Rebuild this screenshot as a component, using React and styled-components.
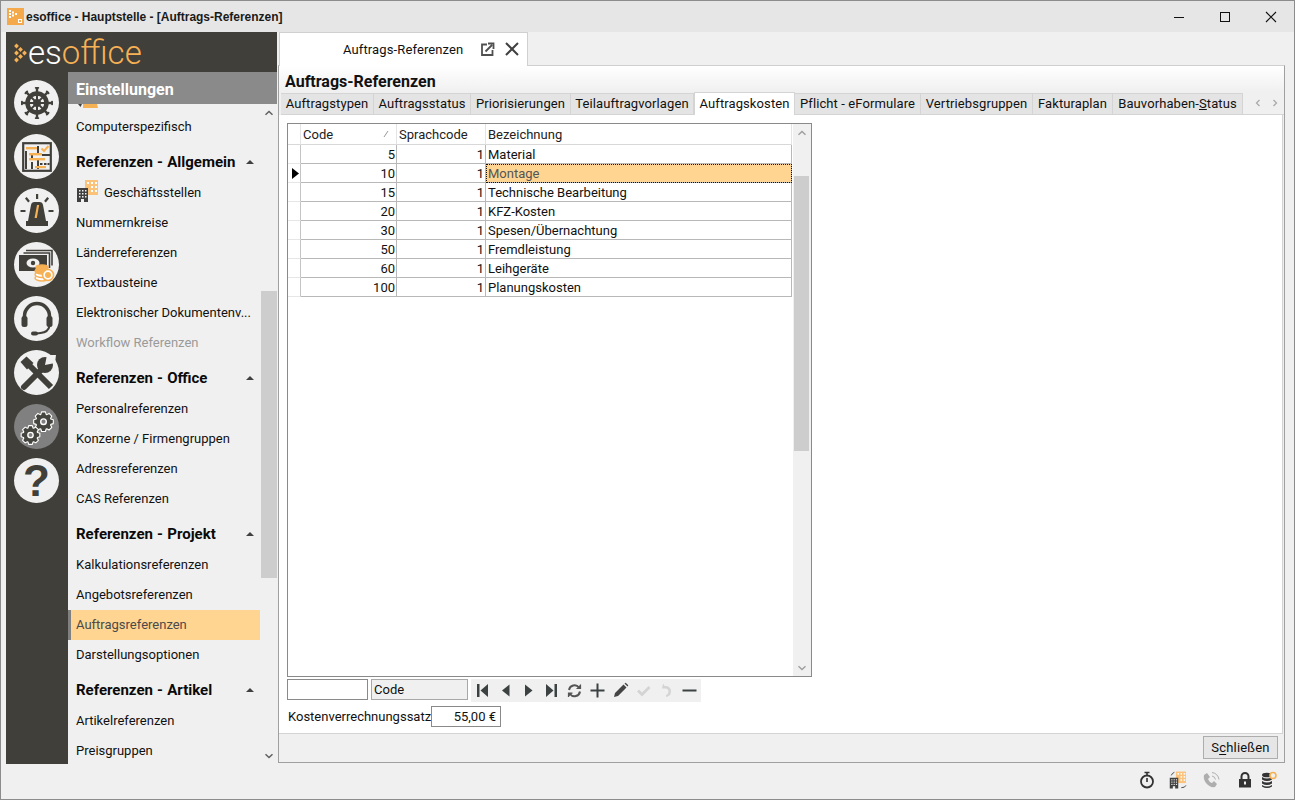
import React from 'react';
import styled, { createGlobalStyle } from 'styled-components';

const GlobalStyle = createGlobalStyle`
  html, body {
    margin: 0;
    padding: 0;
    height: 100%;
    overflow: hidden;
  }
  body {
    font-family: Roboto, "Liberation Sans", sans-serif;
    font-size: 13px;
    color: #111;
    background: #f0f0f0;
  }
  * { box-sizing: border-box; }
`;

const ORANGE = '#f7b155';
const DARK = '#403f3a';

const Window = styled.div`
  width: 1295px;
  height: 800px;
  display: flex;
  flex-direction: column;
  background: #f0f0f0;
  border: 1px solid #8c8c8c;
`;

const TitleBar = styled.div`
  height: 31px;
  flex: none;
  display: flex;
  align-items: center;
  background: #e6e6e6;
  padding-left: 6px;
`;

const TitleText = styled.div`
  margin-left: 2px;
  font-family: "Liberation Sans", sans-serif;
  font-size: 12px;
  font-weight: 700;
  letter-spacing: -0.02px;
  color: #1a1a1a;
  flex: 1;
`;

const WinButton = styled.div`
  width: 46px;
  height: 31px;
  display: flex;
  align-items: center;
  justify-content: center;
`;

const Body = styled.div`
  height: 733px;
  flex: none;
  display: flex;
  padding-left: 5px;
`;

const Sidebar = styled.div`
  width: 271px;
  height: 732px;
  flex: none;
  display: flex;
  flex-direction: column;
  background: ${DARK};
`;

const LogoRow = styled.div`
  height: 40px;
  flex: none;
  display: flex;
  align-items: center;
  padding: 2px 0 0 8px;
`;

const LogoText = styled.div`
  margin-left: 1px;
  font-family: Roboto, sans-serif;
  font-weight: 300;
  font-size: 33px;
  line-height: 38px;
  color: ${ORANGE};
  span { color: #fff; }
`;

const SideMain = styled.div`
  flex: 1;
  min-height: 0;
  display: flex;
`;

const Rail = styled.div`
  width: 62px;
  flex: none;
  display: flex;
  flex-direction: column;
  align-items: center;
  gap: 9px;
  padding: 8px 1px 0 0;
`;

const RailButton = styled.div`
  width: 45px;
  height: 45px;
  border-radius: 50%;
  flex: none;
  display: flex;
  align-items: center;
  justify-content: center;
  background: ${(p) => (p.$active ? '#808080' : '#f0f0f0')};
`;

const QuestionMark = styled.span`
  font-family: "Liberation Sans", sans-serif;
  font-weight: 700;
  font-size: 44px;
  line-height: 45px;
  color: ${DARK};
`;

const MenuColumn = styled.div`
  width: 209px;
  flex: none;
  display: flex;
  flex-direction: column;
`;

const MenuHeader = styled.div`
  height: 32px;
  flex: none;
  display: flex;
  align-items: center;
  padding: 2px 0 0 8px;
  background: #8a8a8a;
  color: #fff;
  font-size: 16px;
  font-weight: 700;
`;

const MenuBody = styled.div`
  flex: 1;
  min-height: 0;
  display: flex;
  background: #f0f0f0;
`;

const MenuList = styled.div`
  width: 192px;
  flex: none;
  overflow: hidden;
`;

const ClippedIcon = styled.div`
  height: 8px;
  padding-left: 10px;
  svg { display: block; }
`;

const MenuItem = styled.div`
  height: 30px;
  display: flex;
  align-items: center;
  padding-left: ${(p) => (p.$selected ? '5px' : '8px')};
  padding-bottom: 2px;
  white-space: nowrap;
  color: ${(p) => (p.$selected ? '#4a4a4a' : p.$disabled ? '#9a9a9a' : '#111')};
  background: ${(p) => (p.$selected ? '#ffd591' : 'transparent')};
  border-left: ${(p) => (p.$selected ? '3px solid #808080' : 'none')};
  svg { margin-right: 2px; margin-top: -3px; }
`;

const MenuGroup = styled.div`
  height: 36px;
  display: flex;
  align-items: center;
  justify-content: space-between;
  padding: 4px 3px 0 8px;
  font-size: 15px;
  font-weight: 700;
  word-spacing: 0.5px;
  color: #0a0a0a;
`;

const GroupCaret = styled.div`
  width: 0;
  height: 0;
  margin-right: 3px;
  border-left: 4px solid transparent;
  border-right: 4px solid transparent;
  border-bottom: 4px solid #404040;
`;

const Scrollbar = styled.div`
  width: ${(p) => p.$width}px;
  flex: none;
  display: flex;
  flex-direction: column;
  background: #f0f0f0;
`;

const ScrollArrow = styled.div`
  height: 17px;
  flex: none;
  display: flex;
  align-items: center;
  justify-content: center;
`;

const ScrollGap = styled.div`
  height: ${(p) => p.$height}px;
  flex: none;
`;

const ScrollThumb = styled.div`
  flex: none;
  height: ${(p) => p.$height}px;
  margin: 0 ${(p) => p.$right}px 0 1px;
  background: #cdcdcd;
`;

const ScrollFill = styled.div`
  flex: 1;
`;

const Main = styled.div`
  flex: 1;
  min-width: 0;
  display: flex;
  flex-direction: column;
  padding: 0 10px 0 1px;
`;

const DocTabs = styled.div`
  height: 33px;
  flex: none;
  display: flex;
  padding-left: 1px;
`;

const DocTab = styled.div`
  width: 249px;
  height: 34px;
  display: flex;
  align-items: center;
  padding: 0 0 1px 63px;
  gap: 17px;
  background: #fff;
  border: 1px solid #d0d0d0;
  border-bottom: none;
  position: relative;
  z-index: 1;
  letter-spacing: 0.12px;
`;

const DocTabIcons = styled.div`
  display: flex;
  align-items: center;
  gap: 9px;
`;

const Panel = styled.div`
  width: 1007px;
  height: 698px;
  flex: none;
  display: flex;
  flex-direction: column;
  border: 1px solid #a0a0a0;
  border-top-color: #d0d0d0;
`;

const PanelHead = styled.div`
  height: 26px;
  flex: none;
  padding: 6px 0 0 6px;
  background: linear-gradient(#fff, #f0f0f0);
  font-size: 16px;
  line-height: 19px;
  font-weight: 700;
  color: #111;
`;

const TabStrip = styled.div`
  height: 23px;
  flex: none;
  display: flex;
  align-items: flex-end;
  padding-left: 2px;
  background: #f0f0f0;
`;

const Tab = styled.div`
  width: ${(p) => p.$width}px;
  height: ${(p) => (p.$active ? '23px' : '22px')};
  flex: none;
  display: flex;
  align-items: center;
  justify-content: center;
  padding-bottom: 2px;
  white-space: nowrap;
  background: ${(p) => (p.$active ? '#fff' : '#e4e4e4')};
  border: 1px solid #d4d4d4;
  border-left: ${(p) => (p.$active ? '1px solid #d4d4d4' : 'none')};
  border-bottom: ${(p) => (p.$active ? 'none' : '1px solid #d4d4d4')};
  letter-spacing: 0.1px;
`;

const TabArrows = styled.div`
  flex: 1;
  display: flex;
  align-items: center;
  justify-content: flex-end;
  gap: 9px;
  padding: 0 5px 2px 0;
  height: 22px;
  border-bottom: 1px solid #d4d4d4;
`;

const Content = styled.div`
  flex: 1;
  min-height: 0;
  background: #fff;
  border-right: 1px solid #d4d4d4;
  padding: 8px 0 0 8px;
  margin-right: 1px;
`;

const GridBox = styled.div`
  width: 525px;
  height: 554px;
  display: flex;
  border: 1px solid #8a8a8a;
  background: #fff;
`;

const GridArea = styled.div`
  width: 505px;
  flex: none;
`;

const Row = styled.div`
  display: grid;
  grid-template-columns: 13px 96px 89px 306px;
  height: ${(p) => (p.$head ? '21px' : '19px')};
`;

const HeadCell = styled.div`
  display: flex;
  align-items: center;
  justify-content: space-between;
  padding: 0 7px 0 2px;
  background: #fff;
  border-right: 1px solid #e4e4e4;
  border-bottom: 1px solid #d8d8d8;
  color: #222;
`;

const Indicator = styled.div`
  display: flex;
  align-items: center;
  justify-content: center;
  padding-left: 2px;
  border-right: 1px solid #c4c4c4;
  border-bottom: 1px solid #e6e6e6;
`;

const Cell = styled.div`
  display: flex;
  align-items: center;
  justify-content: ${(p) => (p.$right ? 'flex-end' : 'flex-start')};
  padding: 0 ${(p) => (p.$right ? '1px' : '0')} 0 2px;
  border-right: 1px solid #b8b8b8;
  border-bottom: 1px solid #b8b8b8;
  white-space: nowrap;
`;

const SelectedCell = styled(Cell)`
  background: #ffd591;
  color: #555;
  outline: 1px dotted #111;
  outline-offset: -1px;
`;

const Toolbar = styled.div`
  display: flex;
  align-items: flex-start;
  margin-top: 2px;
  height: 22px;
`;

const FieldBase = styled.div`
  height: 21px;
  flex: none;
  border: 1px solid #8a8a8a;
  display: flex;
  align-items: center;
`;

const SearchField = styled(FieldBase)`
  width: 81px;
  background: #fff;
`;

const SortField = styled(FieldBase)`
  width: 97px;
  margin-left: 3px;
  padding-left: 2px;
  background: #f0f0f0;
  border-color: #a8a8a8;
`;

const Navigator = styled.div`
  width: 230px;
  height: 23px;
  flex: none;
  margin-left: 3px;
  background: #f0f0f0;
  display: grid;
  grid-template-columns: repeat(10, 23px);
`;

const NavButton = styled.div`
  display: flex;
  align-items: center;
  justify-content: center;
`;

const RateRow = styled.div`
  display: flex;
  align-items: center;
  margin-top: 5px;
  padding-left: 1px;
`;

const RateLabel = styled.div`
  width: 143px;
  flex: none;
  white-space: nowrap;
`;

const RateField = styled(FieldBase)`
  width: 70px;
  justify-content: flex-end;
  padding-right: 4px;
  background: #fff;
`;

const ButtonBar = styled.div`
  height: 29px;
  flex: none;
  display: flex;
  justify-content: flex-end;
  align-items: flex-start;
  padding: 2px 5px 0 0;
  background: #f0f0f0;
  border-top: 1px solid #d4d4d4;
  margin-right: 1px;
`;

const CloseButton = styled.div`
  width: 75px;
  height: 23px;
  display: flex;
  align-items: center;
  justify-content: center;
  background: #e6e6e6;
  border: 1px solid #adadad;
  letter-spacing: 0.2px;
  u { text-underline-offset: 2px; }
`;

const StatusBar = styled.div`
  flex: 1;
  display: flex;
  align-items: center;
  justify-content: flex-end;
  padding: 0 15px 4px 0;
`;

const StatusIcon = styled.div`
  width: 20px;
  height: 20px;
  display: flex;
  align-items: center;
  justify-content: center;
  margin-left: ${(p) => p.$gap}px;
`;

function OrangeBuilding({ sync }) {
  return (
    <svg width="26" height="24" viewBox="0 0 26 24">
      <rect x="9" y="1" width="13" height="15" fill="#fbc27a" />
      <g fill="#fff">
        <rect x="11" y="3" width="2" height="2" /><rect x="15" y="3" width="2" height="2" /><rect x="19" y="3" width="2" height="2" />
        <rect x="15" y="7" width="2" height="2" /><rect x="19" y="7" width="2" height="2" />
        <rect x="15" y="11" width="2" height="2" /><rect x="19" y="11" width="2" height="2" />
      </g>
      <path d="M1 9 h11 v14 h-4 v-3 h-3 v3 h-4 z" fill="#404040" />
      <g fill="#f0f0f0">
        <rect x="3" y="11" width="1.5" height="1.5" /><rect x="6" y="11" width="1.5" height="1.5" /><rect x="9" y="11" width="1.5" height="1.5" />
        <rect x="3" y="14" width="1.5" height="1.5" /><rect x="6" y="14" width="1.5" height="1.5" /><rect x="9" y="14" width="1.5" height="1.5" />
        <rect x="3" y="17" width="1.5" height="1.5" /><rect x="6" y="17" width="1.5" height="1.5" /><rect x="9" y="17" width="1.5" height="1.5" />
      </g>
      {sync && <path d="M3 6 q1 -3 4 -4 M22 19 q-1 3 -6 3" fill="none" stroke="#404040" strokeWidth="1.2" />}
    </svg>
  );
}

function PersonSliver() {
  return (
    <svg width="20" height="6" viewBox="0 0 20 6">
      <path d="M5 0 h14 l1 4 h-15 z" fill={ORANGE} />
      <path d="M0 0 h4 l-1.5 3 z" fill="#404040" />
    </svg>
  );
}

function LogoMark() {
  const dots = [[2.5, 3], [2.5, 10], [2.5, 17], [6.5, 6.5], [6.5, 13.5], [10.5, 10]];
  return (
    <svg width="13" height="20" viewBox="0 0 13 20">
      {dots.map(([x, y], i) => (
        <path key={i} d={`M${x} ${y - 2.4} l2.4 2.4 l-2.4 2.4 l-2.4 -2.4 z`} fill={ORANGE} />
      ))}
    </svg>
  );
}

function WheelIcon() {
  const spokes = [0, 45, 90, 135, 180, 225, 270, 315];
  return (
    <svg width="36" height="36" viewBox="0 0 36 36">
      <circle cx="18" cy="18" r="9.5" fill="none" stroke={DARK} strokeWidth="4.5" />
      <circle cx="18" cy="18" r="4" fill={DARK} />
      {spokes.map((a) => (
        <g key={a} transform={`rotate(${a} 18 18)`}>
          <rect x="17" y="7" width="2" height="9" fill={DARK} />
          <rect x="16.8" y="2" width="2.4" height="6" fill={DARK} />
          <rect x="15.8" y="2" width="4.4" height="1.8" rx="0.8" fill={DARK} />
        </g>
      ))}
    </svg>
  );
}

function BoardIcon() {
  return (
    <svg width="30" height="30" viewBox="0 0 30 30">
      <rect x="1.2" y="1.2" width="27.6" height="27.6" fill="none" stroke={DARK} strokeWidth="2.2" />
      <g fill={DARK}>
        <rect x="3" y="9" width="2" height="18" />
        <rect x="9" y="11" width="2" height="7" /><rect x="9" y="20" width="2" height="7" />
        <rect x="15" y="4" width="2" height="7" /><rect x="15" y="18" width="2" height="9" />
        <rect x="20" y="12" width="8" height="2" />
        <rect x="18" y="21" width="2.5" height="2" /><rect x="22" y="21" width="2.5" height="2" /><rect x="25.5" y="21" width="2" height="2" />
      </g>
      <g fill={ORANGE}>
        <rect x="4" y="5" width="11" height="2.4" />
        <rect x="7" y="11" width="13" height="2.4" />
        <rect x="7" y="16" width="16" height="2.4" />
        <rect x="13" y="24" width="11" height="2.2" />
      </g>
      <path d="M19.5 6.5 l2.5 2.5 l4.5 -5" fill="none" stroke={ORANGE} strokeWidth="2" />
    </svg>
  );
}

function SirenIcon() {
  return (
    <svg width="36" height="36" viewBox="0 0 36 36">
      <path d="M12 12 q.5 -3 3.5 -3 h5 q3 0 3.5 3 l3 16 h-18 z" fill={DARK} />
      <rect x="7" y="28" width="22" height="5" fill={DARK} />
      <path d="M18 12 l2.2 0 l-2.4 13 l-2.2 0 z" fill={ORANGE} />
      <g fill={DARK}>
        <rect x="17" y="1" width="2.2" height="5" />
        <path d="M6 5.5 l1.7 -1.4 l3.2 3.9 l-1.7 1.4 z" />
        <path d="M30 5.5 l-1.7 -1.4 l-3.2 3.9 l1.7 1.4 z" />
        <rect x="1.5" y="17" width="5" height="2" />
        <rect x="29.5" y="17" width="5" height="2" />
      </g>
    </svg>
  );
}

function MoneyIcon() {
  return (
    <svg width="38" height="36" viewBox="0 0 38 36">
      <path d="M8 3.5 h26 v15" fill="none" stroke={DARK} strokeWidth="1.6" />
      <path d="M5.5 6 h26 v15" fill="none" stroke={DARK} strokeWidth="1.6" />
      <rect x="1" y="8" width="28" height="16" fill={DARK} />
      <ellipse cx="15" cy="16" rx="6.5" ry="4.6" fill="#f0f0f0" />
      <circle cx="15" cy="16" r="2.2" fill={DARK} />
      <g fill="#fff" stroke={ORANGE} strokeWidth="1.4">
        <ellipse cx="24" cy="31" rx="7" ry="3" />
        <ellipse cx="24" cy="27.5" rx="7" ry="3" />
        <ellipse cx="24" cy="24" rx="7" ry="3" fill={ORANGE} />
        <ellipse cx="24" cy="20.5" rx="6" ry="2.6" fill={ORANGE} />
        <circle cx="30" cy="28" r="5.5" fill="#fff" strokeWidth="1.6" />
      </g>
      <circle cx="30" cy="28" r="3" fill={ORANGE} />
    </svg>
  );
}

function HeadsetIcon() {
  return (
    <svg width="38" height="38" viewBox="0 0 38 38">
      <path d="M6.5 21 v-5 a12.5 12.5 0 0 1 25 0 v5" fill="none" stroke={DARK} strokeWidth="3.5" />
      <rect x="3.5" y="16" width="6" height="11" rx="2.5" fill={DARK} />
      <rect x="28.5" y="16" width="6" height="11" rx="2.5" fill={DARK} />
      <path d="M31.5 26 q-1 6 -9 7 l-4 .5" fill="none" stroke={DARK} strokeWidth="2" />
      <rect x="13" y="31.5" width="7" height="4" rx="2" fill={DARK} />
    </svg>
  );
}

function ToolsIcon() {
  return (
    <svg width="38" height="38" viewBox="0 0 38 38">
      <path d="M10 10 L33 33" stroke={DARK} strokeWidth="6" />
      <path d="M2.5 8 L8.5 2.5 L15.5 9 L9 15.5 Z" fill={DARK} />
      <path d="M6 33 L24 15" stroke={DARK} strokeWidth="6" strokeLinecap="round" />
      <circle cx="27" cy="11" r="8" fill={DARK} />
      <path d="M27 11 L29 1 L38 1 L37 9 Z" fill="#f0f0f0" />
    </svg>
  );
}

function Gear({ cx, cy, r }) {
  const teeth = [0, 45, 90, 135, 180, 225, 270, 315];
  let d = '';
  teeth.forEach((a) => {
    const s = (deg, rad) => {
      const t = ((a + deg) * Math.PI) / 180;
      return `${(cx + rad * Math.sin(t)).toFixed(2)} ${(cy - rad * Math.cos(t)).toFixed(2)}`;
    };
    d += `${d ? 'L' : 'M'}${s(-20, r * 0.78)} L${s(-11, r)} L${s(11, r)} L${s(20, r * 0.78)} `;
  });
  return (
    <g>
      <path d={`${d}Z`} fill="#45453f" stroke="#fff" strokeWidth="1.1" strokeLinejoin="round" />
      <circle cx={cx} cy={cy} r={r * 0.28} fill="#808080" stroke="#fff" strokeWidth="1.4" />
    </g>
  );
}

function GearsIcon() {
  return (
    <svg width="36" height="36" viewBox="0 0 36 36">
      <Gear cx={24.5} cy={12.7} r={10} />
      <Gear cx={11.5} cy={26} r={9.5} />
    </svg>
  );
}

function Chevron({ up, color = '#606060', size = 10 }) {
  return (
    <svg width={size} height={size} viewBox="0 0 10 10">
      <path d={up ? 'M1.5 6.8 L5 3.5 L8.5 6.8' : 'M1.5 3.2 L5 6.5 L8.5 3.2'} fill="none" stroke={color} strokeWidth="1.5" />
    </svg>
  );
}

const NAV_DARK = '#3c4242';
const NAV_OFF = '#d4d4d4';

function NavIcon({ name }) {
  const paths = {
    first: <path d="M3 2 h2.5 v13 h-2.5 z M14 2 v13 l-7.5 -6.5 z" fill={NAV_DARK} />,
    prev: <path d="M12.5 2.5 v12 l-7.5 -6 z" fill={NAV_DARK} />,
    next: <path d="M5 2.5 v12 l7.5 -6 z" fill={NAV_DARK} />,
    last: <path d="M14 2 h-2.5 v13 h2.5 z M3 2 v13 l7.5 -6.5 z" fill={NAV_DARK} />,
    refresh: (
      <g fill="none" stroke="#555" strokeWidth="2">
        <path d="M3 8 a5.6 5.6 0 0 1 10 -2.5" />
        <path d="M14 9.5 a5.6 5.6 0 0 1 -10 2.5" />
        <path d="M14.5 2.5 v4 h-4" strokeWidth="1.2" fill="#555" />
        <path d="M2.5 15 v-4 h4" strokeWidth="1.2" fill="#555" />
      </g>
    ),
    add: <path d="M7.5 1.5 h2 v6 h6 v2 h-6 v6 h-2 v-6 h-6 v-2 h6 z" fill={NAV_DARK} />,
    edit: <path d="M2 15 l1 -4 l8.5 -8.5 l3 3 l-8.5 8.5 z M12.5 1.5 l1.2 -.8 l2.6 2.6 l-.8 1.2 z" fill="#444" />,
    check: <path d="M2 9.5 l2 -2 l3 3 l6.5 -6.5 l2 2 l-8.5 8.5 z" fill={NAV_OFF} />,
    undo: <path d="M5 2 l-1 4.5 h4 q2.5 .5 2.5 3 q0 2.5 -2.5 3.5 v2 q5 -1 5 -5.5 q0 -5 -5 -5.5 h-1.5 l-1 -2 z" fill={NAV_OFF} />,
    remove: <rect x="1.5" y="7.5" width="14" height="2" fill={NAV_DARK} />,
  };
  return <svg width="17" height="17" viewBox="0 0 17 17">{paths[name]}</svg>;
}

const sections = [
  { type: 'item', label: 'Computerspezifisch' },
  { type: 'group', label: 'Referenzen - Allgemein' },
  { type: 'item', label: 'Geschäftsstellen', icon: true },
  { type: 'item', label: 'Nummernkreise' },
  { type: 'item', label: 'Länderreferenzen' },
  { type: 'item', label: 'Textbausteine' },
  { type: 'item', label: 'Elektronischer Dokumentenv...' },
  { type: 'item', label: 'Workflow Referenzen', disabled: true },
  { type: 'group', label: 'Referenzen - Office' },
  { type: 'item', label: 'Personalreferenzen' },
  { type: 'item', label: 'Konzerne / Firmengruppen' },
  { type: 'item', label: 'Adressreferenzen' },
  { type: 'item', label: 'CAS Referenzen' },
  { type: 'group', label: 'Referenzen - Projekt' },
  { type: 'item', label: 'Kalkulationsreferenzen' },
  { type: 'item', label: 'Angebotsreferenzen' },
  { type: 'item', label: 'Auftragsreferenzen', selected: true },
  { type: 'item', label: 'Darstellungsoptionen' },
  { type: 'group', label: 'Referenzen - Artikel' },
  { type: 'item', label: 'Artikelreferenzen' },
  { type: 'item', label: 'Preisgruppen' },
];

const tabs = [
  { label: 'Auftragstypen', width: 93 },
  { label: 'Auftragsstatus', width: 97 },
  { label: 'Priorisierungen', width: 100 },
  { label: 'Teilauftragvorlagen', width: 123 },
  { label: 'Auftragskosten', width: 101, active: true },
  { label: 'Pflicht - eFormulare', width: 126 },
  { label: 'Vertriebsgruppen', width: 112 },
  { label: 'Fakturaplan', width: 80 },
  { label: <>Bauvorhaben-<u>S</u>tatus</>, width: 130 },
];

const rows = [
  [5, 'Material'],
  [10, 'Montage'],
  [15, 'Technische Bearbeitung'],
  [20, 'KFZ-Kosten'],
  [30, 'Spesen/Übernachtung'],
  [50, 'Fremdleistung'],
  [60, 'Leihgeräte'],
  [100, 'Planungskosten'],
];

export default function App() {
  return (
    <>
      <GlobalStyle />
      <Window>
        <TitleBar>
          <svg width="17" height="17" viewBox="0 0 17 17">
            <rect width="17" height="17" fill="#f5a94d" />
            <g fill="#fff">
              <rect x="2" y="2" width="2" height="2" /><rect x="2" y="5" width="2" height="2" /><rect x="2" y="8" width="2" height="2" />
              <rect x="5" y="3.5" width="2" height="2" /><rect x="5" y="6.5" width="2" height="2" />
              <rect x="8" y="5" width="2" height="2" />
            </g>
            <rect x="11.5" y="11.5" width="3" height="3" fill="none" stroke="#fff" />
          </svg>
          <TitleText>esoffice - Hauptstelle - [Auftrags-Referenzen]</TitleText>
          <WinButton>
            <svg width="12" height="12" viewBox="0 0 12 12"><path d="M1 6.5 h10" stroke="#111" /></svg>
          </WinButton>
          <WinButton>
            <svg width="12" height="12" viewBox="0 0 12 12"><rect x="1.5" y="1.5" width="9" height="9" fill="none" stroke="#111" /></svg>
          </WinButton>
          <WinButton>
            <svg width="12" height="12" viewBox="0 0 12 12"><path d="M1 1 L11 11 M11 1 L1 11" stroke="#111" strokeWidth="1.1" /></svg>
          </WinButton>
        </TitleBar>
        <Body>
          <Sidebar>
            <LogoRow>
              <LogoMark />
              <LogoText><span>es</span>office</LogoText>
            </LogoRow>
            <SideMain>
              <Rail>
                <RailButton><WheelIcon /></RailButton>
                <RailButton><BoardIcon /></RailButton>
                <RailButton><SirenIcon /></RailButton>
                <RailButton><MoneyIcon /></RailButton>
                <RailButton><HeadsetIcon /></RailButton>
                <RailButton><ToolsIcon /></RailButton>
                <RailButton $active><GearsIcon /></RailButton>
                <RailButton><QuestionMark>?</QuestionMark></RailButton>
              </Rail>
              <MenuColumn>
                <MenuHeader>Einstellungen</MenuHeader>
                <MenuBody>
                  <MenuList>
                    <ClippedIcon><PersonSliver /></ClippedIcon>
                    {sections.map((s) => (
                      s.type === 'group' ? (
                        <MenuGroup key={s.label}>{s.label}<GroupCaret /></MenuGroup>
                      ) : (
                        <MenuItem key={s.label} $selected={s.selected} $disabled={s.disabled}>
                          {s.icon && <OrangeBuilding />}
                          {s.label}
                        </MenuItem>
                      )
                    ))}
                  </MenuList>
                  <Scrollbar $width={17}>
                    <ScrollArrow><Chevron up /></ScrollArrow>
                    <ScrollGap $height={170} />
                    <ScrollThumb $height={287} $right={0} />
                    <ScrollFill />
                    <ScrollArrow><Chevron /></ScrollArrow>
                  </Scrollbar>
                </MenuBody>
              </MenuColumn>
            </SideMain>
          </Sidebar>
          <Main>
            <DocTabs>
              <DocTab>
                Auftrags-Referenzen
                <DocTabIcons>
                  <svg width="15" height="15" viewBox="0 0 15 15">
                    <path d="M7 2.5 H2 V13 H12.5 V8" fill="none" stroke="#505050" strokeWidth="1.8" />
                    <path d="M5.5 9.5 L12 3 M8 1.5 h5.5 v5.5" fill="none" stroke="#505050" strokeWidth="1.8" />
                  </svg>
                  <svg width="16" height="16" viewBox="0 0 16 16">
                    <path d="M2 2 L14 14 M14 2 L2 14" stroke="#404040" strokeWidth="2" />
                  </svg>
                </DocTabIcons>
              </DocTab>
            </DocTabs>
            <Panel>
              <PanelHead>Auftrags-Referenzen</PanelHead>
              <TabStrip>
                {tabs.map((t, i) => (
                  <Tab key={i} $width={t.width} $active={t.active}>{t.label}</Tab>
                ))}
                <TabArrows>
                  <svg width="8" height="10" viewBox="0 0 8 10"><path d="M5.5 2 L2.5 5 L5.5 8" fill="none" stroke="#aaa" strokeWidth="1.3" /></svg>
                  <svg width="8" height="10" viewBox="0 0 8 10"><path d="M2.5 2 L5.5 5 L2.5 8" fill="none" stroke="#aaa" strokeWidth="1.3" /></svg>
                </TabArrows>
              </TabStrip>
              <Content>
                <GridBox>
                  <GridArea>
                    <Row $head>
                      <HeadCell />
                      <HeadCell>
                        Code
                        <svg width="6" height="8" viewBox="0 0 6 8"><path d="M1 7 L5 1" stroke="#999" /></svg>
                      </HeadCell>
                      <HeadCell>Sprachcode</HeadCell>
                      <HeadCell>Bezeichnung</HeadCell>
                    </Row>
                    {rows.map(([code, name], i) => (
                      <Row key={code}>
                        <Indicator>
                          {i === 1 && (
                            <svg width="7" height="11" viewBox="0 0 7 11"><path d="M0 0 L7 5.5 L0 11 Z" fill="#000" /></svg>
                          )}
                        </Indicator>
                        <Cell $right>{code}</Cell>
                        <Cell $right>1</Cell>
                        {i === 1 ? <SelectedCell>{name}</SelectedCell> : <Cell>{name}</Cell>}
                      </Row>
                    ))}
                  </GridArea>
                  <Scrollbar $width={18}>
                    <ScrollArrow><Chevron up color="#a0a0a0" /></ScrollArrow>
                    <ScrollGap $height={35} />
                    <ScrollThumb $height={275} $right={2} />
                    <ScrollFill />
                    <ScrollArrow><Chevron color="#a0a0a0" /></ScrollArrow>
                  </Scrollbar>
                </GridBox>
                <Toolbar>
                  <SearchField />
                  <SortField>Code</SortField>
                  <Navigator>
                    {['first', 'prev', 'next', 'last', 'refresh', 'add', 'edit', 'check', 'undo', 'remove'].map((n) => (
                      <NavButton key={n}><NavIcon name={n} /></NavButton>
                    ))}
                  </Navigator>
                </Toolbar>
                <RateRow>
                  <RateLabel>Kostenverrechnungssatz</RateLabel>
                  <RateField>55,00 €</RateField>
                </RateRow>
              </Content>
              <ButtonBar>
                <CloseButton><span>S<u>c</u>hließen</span></CloseButton>
              </ButtonBar>
            </Panel>
          </Main>
        </Body>
        <StatusBar>
          <StatusIcon $gap={0}>
            <svg width="16" height="18" viewBox="0 0 16 18">
              <circle cx="8" cy="10.5" r="6" fill="none" stroke="#333" strokeWidth="1.8" />
              <path d="M8 7 V11 M5.5 1.5 H10.5 M8 1.5 V4" stroke="#333" strokeWidth="1.6" fill="none" />
            </svg>
          </StatusIcon>
          <StatusIcon $gap={12}>
            <OrangeBuilding sync />
          </StatusIcon>
          <StatusIcon $gap={12}>
            <svg width="18" height="18" viewBox="0 0 18 18">
              <path d="M2 4 l3 -2 l3 4 l-2 2 q1 3 4 4 l2 -2 l3 3 l-2 3 q-5 1 -9 -4 q-3 -4 -2 -8 z" fill="#aeaeae" />
              <path d="M10 1.5 q6 1 7 7 M10 5 q3 .5 3.5 3.5" fill="none" stroke="#aeaeae" />
            </svg>
          </StatusIcon>
          <StatusIcon $gap={14}>
            <svg width="14" height="16" viewBox="0 0 14 16">
              <path d="M3.5 7 V4.5 a3.5 3.5 0 0 1 7 0 V7" fill="none" stroke="#333" strokeWidth="2" />
              <rect x="1" y="7" width="12" height="8.5" fill="#333" />
              <rect x="6" y="9.5" width="2" height="3" fill="#f0f0f0" />
            </svg>
          </StatusIcon>
          <StatusIcon $gap={4}>
            <svg width="16" height="18" viewBox="0 0 16 18">
              <g fill="#333">
                <ellipse cx="6" cy="4" rx="5" ry="2.3" />
                <path d="M1 6 q5 3 10 0 v2.5 q-5 3 -10 0 z" />
                <path d="M1 10 q5 3 10 0 v2.5 q-5 3 -10 0 z" />
                <path d="M1 14 q5 3 10 0 v1.5 q-5 3 -10 0 z" />
              </g>
              <circle cx="12" cy="4.5" r="3" fill="#f0f0f0" stroke={ORANGE} strokeWidth="1.6" />
            </svg>
          </StatusIcon>
        </StatusBar>
      </Window>
    </>
  );
}
